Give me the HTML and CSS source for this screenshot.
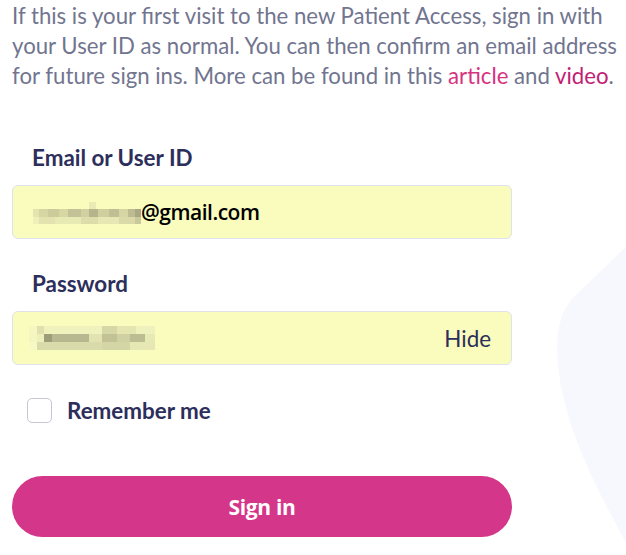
FILE: index.html
```html
<!DOCTYPE html>
<html>
<head>
<meta charset="utf-8">
<link rel="stylesheet" href="styles.css">
</head>
<body>
<svg class="bg-shape" width="90" height="310" viewBox="0 0 90 310" aria-hidden="true">
  <path d="M90 0 L40 48 C22 64 20 90 22 118 C28 180 60 240 90 296 Z" fill="#f7f8fd"/>
</svg>
<main class="page">
  <p class="intro">If this is your first visit to the new Patient Access, sign in with your User ID as normal. You can then confirm an email address for future sign ins. More can be found in this <a class="link" href="#">article</a> and <a class="link visited" href="#">video</a>.</p>
  <form class="form">
    <div class="field">
      <label class="label">Email or User ID</label>
      <div class="input">
        <span class="blur blur-email"></span><span class="value">@gmail.com</span>
      </div>
    </div>
    <div class="field">
      <label class="label">Password</label>
      <div class="input">
        <span class="blur blur-pass"></span>
        <span class="hide">Hide</span>
      </div>
    </div>
    <label class="remember"><span class="checkbox"></span><span>Remember me</span></label>
    <button class="signin" type="button">Sign in</button>
  </form>
</main>
</body>
</html>
```
FILE: styles.css
```css
html, body {
  margin: 0;
  padding: 0;
  background: #ffffff;
}
body {
  width: 626px;
  height: 555px;
  overflow: hidden;
  position: relative;
  font-family: Lato, "Noto Sans", sans-serif;
}
.bg-shape {
  position: absolute;
  right: 0;
  top: 247px;
}
.page {
  position: relative;
  padding: 0 12px;
}
.intro {
  margin: 0;
  padding-top: 1px;
  font-size: 22.2px;
  line-height: 30px;
  color: #71758f;
  width: 612px;
}
.link {
  color: #d6337f;
  text-decoration: none;
}
.link.visited {
  color: #c01e74;
}
.form {
  width: 500px;
  margin-top: 54px;
  display: flex;
  flex-direction: column;
}
.field {
  display: flex;
  flex-direction: column;
  margin-bottom: 32px;
}
.label {
  padding-left: 20px;
  font-weight: 700;
  font-size: 22.4px;
  line-height: 26px;
  color: #2c2e5b;
  margin-bottom: 14px;
}
.input {
  height: 52px;
  box-sizing: content-box;
  border: 1px solid #dfe2ea;
  border-radius: 6px;
  background: #f9fcbc;
  display: flex;
  align-items: center;
  padding: 0 20px;
  font-size: 22.4px;
}
.value {
  color: #000000;
  font-family: "Open Sans", sans-serif;
  font-weight: 600;
  font-size: 21px;
  letter-spacing: -0.5px;
}
.blur {
  display: inline-block;
  flex: none;
}
.blur-email {
  width: 108px;
  height: 22px;
  margin-top: 2px;
  background:
    linear-gradient(90deg, transparent 0 52%, #e9ebb5 52% 58%, transparent 58%) 0 0 / 100% 7px no-repeat,
    linear-gradient(90deg, #e3e4ae 0 6%, #d6d6a3 6% 14%, #cbcb9c 14% 24%, #d7d7a4 24% 32%, #c3c296 32% 44%, #d1d0a0 44% 52%, #b5b48c 52% 60%, #cfce9e 60% 70%, #c0bf94 70% 80%, #d6d6a4 80% 88%, #bdbb91 88% 94%, #a8a884 94%) 0 7px / 100% 8px no-repeat,
    linear-gradient(90deg, #eef0ba 0 6%, #e2e3ae 6% 20%, #e8eab4 20% 44%, #dcddaa 44% 60%, #e6e7b2 60% 80%, #d9daa8 80% 94%, #c9c99b 94%) 0 15px / 100% 7px no-repeat;
}
.blur-pass {
  width: 126px;
  height: 24px;
  margin-left: -4px;
  background:
    linear-gradient(90deg, #f5f6c1 0 6%, #dfe0ae 6% 12%, #f0f2bd 12% 58%, #d6d7a6 58% 70%, #e4e5b1 70% 85%, #eff1bd 85%) 0 0 / 100% 8px no-repeat,
    linear-gradient(90deg, #f4f6c0 0 6%, #eef0bb 6% 12%, #9e9d7a 12% 18%, #b7b790 18% 48%, #e2e3b0 48% 58%, #c2c296 58% 70%, #d0d1a3 70% 80%, #bdbd93 80% 92%, #e8eab6 92%) 0 8px / 100% 8px no-repeat,
    linear-gradient(90deg, #f7f9c3 0 6%, #dadbaa 6% 58%, #d5d6a5 58% 80%, #e6e8b4 80%) 0 16px / 100% 8px no-repeat;
}
.hide {
  margin-left: auto;
  color: #2c2e5b;
  font-size: 22.4px;
}
.remember {
  display: flex;
  align-items: center;
  gap: 15px;
  padding-left: 15px;
  font-weight: 700;
  font-size: 22.4px;
  line-height: 24px;
  color: #2c2e5b;
  margin-top: 1px;
}
.checkbox {
  width: 23px;
  height: 23px;
  border: 1px solid #c5c7d3;
  border-radius: 5px;
  background: #fff;
}
.signin {
  margin-top: 53px;
  height: 61px;
  border: none;
  border-radius: 31px;
  background: #d4368a;
  color: #ffffff;
  font-family: "Source Sans Pro", "Open Sans", Lato, sans-serif;
  font-weight: 700;
  font-size: 21px;
  letter-spacing: -0.3px;
}
```
